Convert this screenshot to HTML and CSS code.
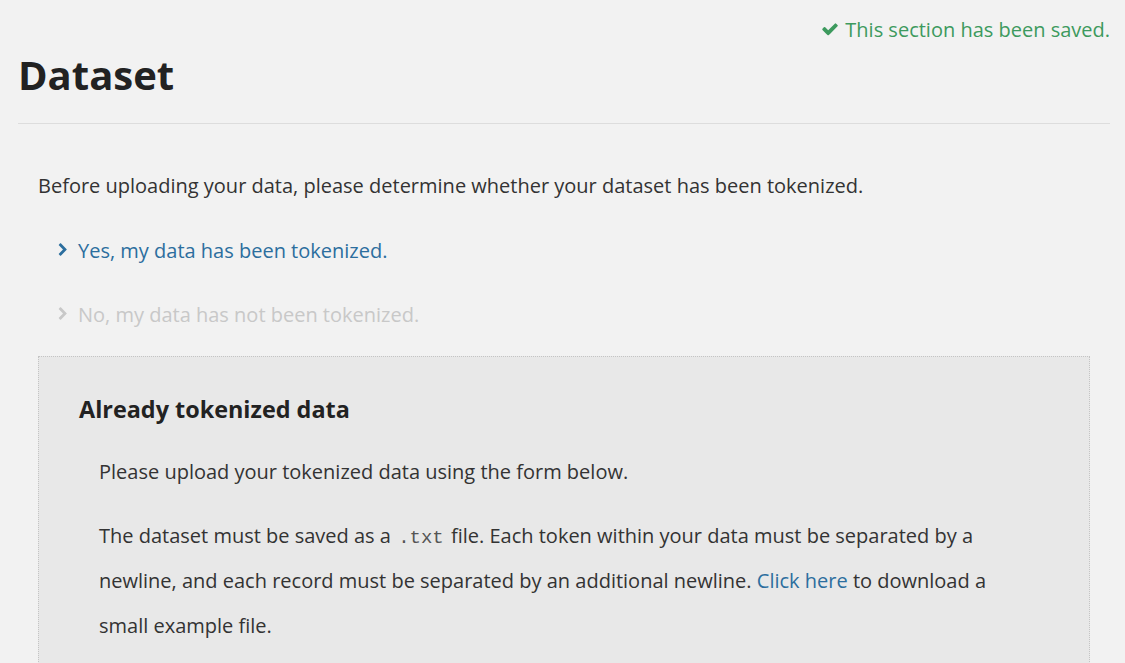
FILE: index.html
```html
<!DOCTYPE html>
<html>
<head>
<meta charset="utf-8">
<link rel="stylesheet" href="styles.css">
</head>
<body>
<div class="page">
  <div class="saved">
    <svg class="check" viewBox="0 0 1792 1792" width="18" height="18"><path fill="currentColor" d="M1671 566q0 40-28 68l-724 724-136 136q-28 28-68 28t-68-28l-136-136-362-362q-28-28-28-68t28-68l136-136q28-28 68-28t68 28l294 295 656-657q28-28 68-28t68 28l136 136q28 28 28 68z"/></svg>
    <span>This section has been saved.</span>
  </div>
  <h1 class="title">Dataset</h1>
  <hr class="rule">
  <div class="content">
    <p class="intro">Before uploading your data, please determine whether your dataset has been tokenized.</p>
    <ul class="choices">
      <li class="choice active"><svg class="chev" viewBox="0 0 1280 1792" width="10" height="14"><path fill="currentColor" d="M1107 877l-742 742q-19 19-45 19t-45-19l-166-166q-19-19-19-45t19-45l531-531-531-531q-19-19-19-45t19-45l166-166q19-19 45-19t45 19l742 742q19 19 19 45t-19 45z"/></svg><a href="#">Yes, my data has been tokenized.</a></li>
      <li class="choice muted"><svg class="chev" viewBox="0 0 1280 1792" width="10" height="14"><path fill="currentColor" d="M1107 877l-742 742q-19 19-45 19t-45-19l-166-166q-19-19-19-45t19-45l531-531-531-531q-19-19-19-45t19-45l166-166q19-19 45-19t45 19l742 742q19 19 19 45t-19 45z"/></svg><span>No, my data has not been tokenized.</span></li>
    </ul>
    <div class="panel">
      <h2 class="panel-title">Already tokenized data</h2>
      <div class="panel-body">
        <p>Please upload your tokenized data using the form below.</p>
        <p>The dataset must be saved as a <code>.txt</code> file. Each token within your data must be separated by a newline, and each record must be separated by an additional newline. <a href="#">Click here</a> to download a small example file.</p>
      </div>
    </div>
  </div>
</div>
</body>
</html>
```

FILE: styles.css
```css
html, body {
  margin: 0;
  padding: 0;
  background: #f2f2f2;
}
body {
  font-family: "Open Sans", "DejaVu Sans", sans-serif;
  color: #333;
  font-size: 20px;
  overflow: hidden;
}
.page {
  padding: 0 15px 0 18px;
}
.saved {
  display: flex;
  justify-content: flex-end;
  align-items: center;
  gap: 6px;
  color: #3d9a5e;
  font-size: 20px;
  height: 26px;
  padding-top: 16px;
}
.check {
  display: block;
}
.title {
  margin: 6px 0 0;
  font-size: 40px;
  font-weight: 700;
  line-height: 54px;
  color: #222;
}
.rule {
  border: 0;
  border-top: 1px solid #ddd;
  margin: 21px 0 0;
}
.content {
  padding: 0 20px;
}
.intro {
  margin: 48px 0 0;
  line-height: 28px;
}
.choices {
  list-style: none;
  margin: 0;
  padding: 0 0 0 20px;
}
.choice {
  display: flex;
  align-items: center;
  height: 28px;
  margin-top: 36px;
}
.chev {
  display: block;
  margin-right: 10px;
}
.active {
  color: #2c6e9e;
}
.active a {
  color: #2c6e9e;
  text-decoration: none;
}
.muted {
  color: #c8c8c8;
}
.panel {
  margin-top: 28px;
  background: #e8e8e8;
  border: 1px dotted #c4c4c4;
  padding: 37px 40px 20px;
}
.panel-title {
  margin: 0;
  font-size: 23.4px;
  font-weight: 700;
  line-height: 30px;
  color: #222;
}
.panel-body {
  padding: 0 20px;
  margin-top: 25px;
}
.panel-body p {
  margin: 0 0 19px;
  line-height: 45px;
}
.panel-body a {
  color: #2c6e9e;
  text-decoration: none;
}
code {
  font-family: "Liberation Mono", "DejaVu Sans Mono", monospace;
  font-size: 19px;
  line-height: 1;
  color: #555;
  padding: 0 2px;
}
```
